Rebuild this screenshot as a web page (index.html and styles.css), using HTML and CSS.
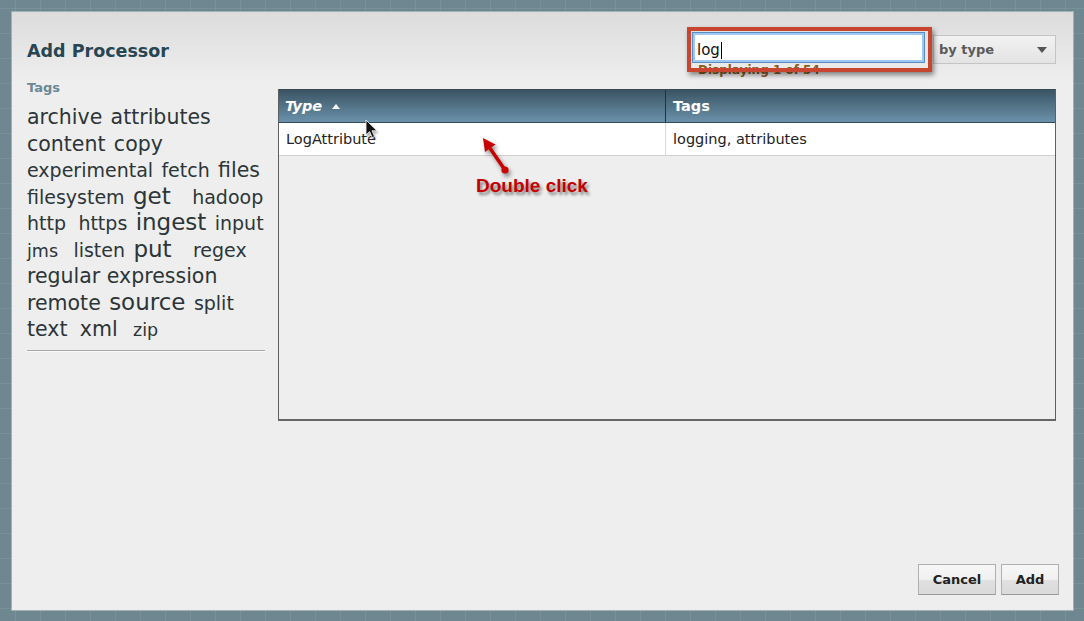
FILE: index.html
```html
<!DOCTYPE html>
<html lang="en">
<head>
    <meta charset="UTF-8">
    <meta name="viewport" content="width=device-width, initial-scale=1.0">
    <title>Add Processor</title>
    <link rel="stylesheet" href="styles.css">
</head>
<body>
    <div class="dialog">
        <div class="dialog-header">
            <h1 class="dialog-title">Add Processor</h1>
            <div class="filter">
                <div class="filter-field">
                    <div class="filter-input">log<span class="caret"></span></div>
                    <div class="filter-count">Displaying 1 of 54</div>
                    <div class="highlight"></div>
                </div>
                <div class="filter-type">by type <span class="select-arrow"></span></div>
            </div>
        </div>

        <div class="dialog-body">
            <div class="tag-panel">
                <div class="tag-label">Tags</div>
                <div class="tag-cloud">
                    <span class="tag s3">archive</span> <span class="tag s3">attributes</span>
                    <span class="tag s3">content</span> <span class="tag s3">copy</span>
                    <span class="tag s2">experimental</span> <span class="tag s2">fetch</span> <span class="tag s3">files</span>
                    <span class="tag s2">filesystem</span> <span class="tag s4 wide">get</span> <span class="tag s2">hadoop</span>
                    <span class="tag s2 spaced">http</span> <span class="tag s2">https</span> <span class="tag s4">ingest</span> <span class="tag s2">input</span>
                    <span class="tag s1 wider">jms</span> <span class="tag s2">listen</span> <span class="tag s4 wide">put</span> <span class="tag s2">regex</span>
                    <span class="tag s3">regular expression</span>
                    <span class="tag s3">remote</span> <span class="tag s4">source</span> <span class="tag s2">split</span>
                    <span class="tag s3 spaced">text</span> <span class="tag s3 wider">xml</span> <span class="tag s1">zip</span>
                </div>
                <div class="tag-rule"></div>
            </div>

            <div class="processor-table">
                <table>
                    <thead>
                        <tr>
                            <th class="type-col">Type <span class="sort-arrow"></span></th>
                            <th>Tags</th>
                        </tr>
                    </thead>
                    <tbody>
                        <tr>
                            <td class="type-col">LogAttribute</td>
                            <td>logging, attributes</td>
                        </tr>
                    </tbody>
                </table>

                <!-- annotation overlay -->
                <svg class="pointer" width="14" height="22" viewBox="0 0 14 22">
                    <path d="M1 1 L1 16 L4.6 12.6 L7.2 18.6 L9.6 17.6 L7 11.8 L12 11.8 Z" fill="#111" stroke="#fff" stroke-width="0.8"/>
                </svg>
                <svg class="callout-arrow" width="45" height="50" viewBox="0 0 45 50">
                    <line x1="32" y1="41" x2="17.5" y2="20" stroke="#c80000" stroke-width="3.5" stroke-linecap="round"/>
                    <polygon points="10,9 22.5,15.5 12,23" fill="#c80000"/>
                    <circle cx="32" cy="41" r="3.6" fill="#c80000"/>
                </svg>
                <div class="callout-text">Double click</div>
            </div>
        </div>

        <div class="dialog-footer">
            <button class="button cancel">Cancel</button>
            <button class="button add">Add</button>
        </div>
    </div>
</body>
</html>
```

FILE: styles.css
```css
html, body {
    margin: 0;
    height: 100%;
}

body {
    padding: 12px 0 0 12px;
    box-sizing: border-box;
    overflow: hidden;
    font-family: "DejaVu Sans", Verdana, sans-serif;
    background-color: #6e8790;
    background-image:
        linear-gradient(90deg, rgba(255,255,255,0.08) 1px, transparent 1px),
        linear-gradient(rgba(255,255,255,0.08) 1px, transparent 1px);
    background-size: 25px 25px;
    background-position: 15px 8px;
}

.dialog {
    box-sizing: border-box;
    width: 1061px;
    height: 598px;
    padding: 20px 14px 15px 15px;
    display: flex;
    flex-direction: column;
    background: linear-gradient(#dcdcdc 0, #eeeeee 70px);
    box-shadow: 0 0 0 1px rgba(255,255,255,0.35);
}

/* header */

.dialog-header {
    display: flex;
    justify-content: space-between;
    align-items: flex-start;
    height: 48px;
    margin-right: 3px;
}

.dialog-title {
    margin: 9px 0 0;
    font-size: 17.5px;
    line-height: 20px;
    font-weight: bold;
    color: #274552;
}

.filter {
    display: flex;
    gap: 8px;
}

.filter-field {
    position: relative;
    width: 233px;
}

.filter-input {
    box-sizing: border-box;
    height: 31px;
    padding: 5px 0 0 4px;
    border: 1px solid #5d8cc0;
    box-shadow: inset 0 0 0 2px #9cc8f2;
    background: #fff;
    font-size: 15px;
    line-height: 24px;
    color: #111;
}

.caret {
    display: inline-block;
    width: 1px;
    height: 17px;
    margin-left: 1px;
    vertical-align: -4px;
    background: #000;
}

.filter-count {
    padding-left: 6px;
    font-size: 12px;
    line-height: 14px;
    font-weight: bold;
    color: #8a5a1c;
}

.highlight {
    position: absolute;
    left: -5px;
    top: -5px;
    width: 245px;
    height: 45px;
    box-sizing: border-box;
    border: 4px solid #c8462f;
    box-shadow: 2px 3px 5px rgba(0,0,0,0.45);
}

.filter-type {
    box-sizing: border-box;
    width: 123px;
    height: 29px;
    margin-top: 3px;
    padding: 0 8px 0 5px;
    display: flex;
    align-items: center;
    justify-content: space-between;
    border: 1px solid #c4c4c4;
    background: linear-gradient(#f2f2f2, #e3e3e3);
    font-size: 13px;
    font-weight: bold;
    color: #5a5a5a;
}

.select-arrow {
    width: 0;
    height: 0;
    border-left: 5.5px solid transparent;
    border-right: 5.5px solid transparent;
    border-top: 6px solid #555;
}

/* body */

.dialog-body {
    display: flex;
    margin-right: 3px;
}

.tag-panel {
    width: 238px;
    flex: none;
}

.tag-label {
    font-size: 13px;
    line-height: 16px;
    font-weight: bold;
    color: #6a8896;
}

.tag-cloud {
    margin: 8px -8px 0 0;
    font-size: 20px;
    line-height: 26.5px;
    color: #2c3538;
}

.tag {
    line-height: 1;
    white-space: nowrap;
    margin-right: 2px;
}

.tag.spaced { margin-right: 6px; }
.tag.wider { margin-right: 9px; }
.tag.wide { margin-right: 15px; }

.s1 { font-size: 17.5px; }
.s2 { font-size: 19px; }
.s3 { font-size: 20.5px; }
.s4 { font-size: 23px; }

.tag-rule {
    margin-top: 7.5px;
    border-top: 1px solid #a8a8a8;
    border-bottom: 1px solid #fafafa;
}

.processor-table {
    position: relative;
    flex: 1;
    box-sizing: border-box;
    height: 332px;
    margin: 9px 0 0 13px;
    border: 1px solid #5f5f5f;
    border-top-color: #3a4a55;
    border-bottom: 2px solid #666;
}

.processor-table table {
    width: 100%;
    border-collapse: collapse;
    font-size: 14.5px;
}

.processor-table th {
    height: 32px;
    padding: 0 7px;
    text-align: left;
    font-weight: bold;
    color: #fff;
    background: linear-gradient(#3b5464, #6a91aa);
    border-bottom: 1px solid #34495a;
}

.processor-table th.type-col {
    width: 373px;
    padding-left: 6px;
    font-style: italic;
    border-right: 1px solid #22333f;
}

.sort-arrow {
    display: inline-block;
    width: 0;
    height: 0;
    margin-left: 5px;
    vertical-align: 2px;
    border-left: 4.5px solid transparent;
    border-right: 4.5px solid transparent;
    border-bottom: 5px solid #fff;
}

.processor-table td {
    height: 32px;
    padding: 0 7px;
    background: #fff;
    color: #222;
    border-bottom: 1px solid #cfcfcf;
}

.processor-table td.type-col {
    border-right: 1px solid #d8d8d8;
}

.pointer {
    position: absolute;
    left: 86px;
    top: 29px;
    filter: drop-shadow(1px 2px 1px rgba(0,0,0,0.35));
}

.callout-arrow {
    position: absolute;
    left: 194px;
    top: 39px;
    filter: drop-shadow(2px 3px 2px rgba(0,0,0,0.45));
}

.callout-text {
    position: absolute;
    left: 197px;
    top: 85px;
    font-family: "Liberation Sans", Arial, sans-serif;
    font-size: 19px;
    line-height: 22px;
    font-weight: bold;
    color: #c40000;
    text-shadow: 2px 3px 3px rgba(0,0,0,0.45);
}

/* footer */

.dialog-footer {
    margin-top: auto;
    display: flex;
    justify-content: flex-end;
    gap: 5px;
}

.button {
    height: 31px;
    padding: 0;
    font-family: inherit;
    font-size: 13px;
    font-weight: bold;
    color: #222;
    border: 1px solid #b0b0b0;
    border-bottom-color: #999;
    border-radius: 0;
    background: linear-gradient(#f7f7f7 0, #f0f0f0 50%, #e1e1e1 50%, #dadada 100%);
}

.button.cancel { width: 78px; }
.button.add { width: 58px; }
```
